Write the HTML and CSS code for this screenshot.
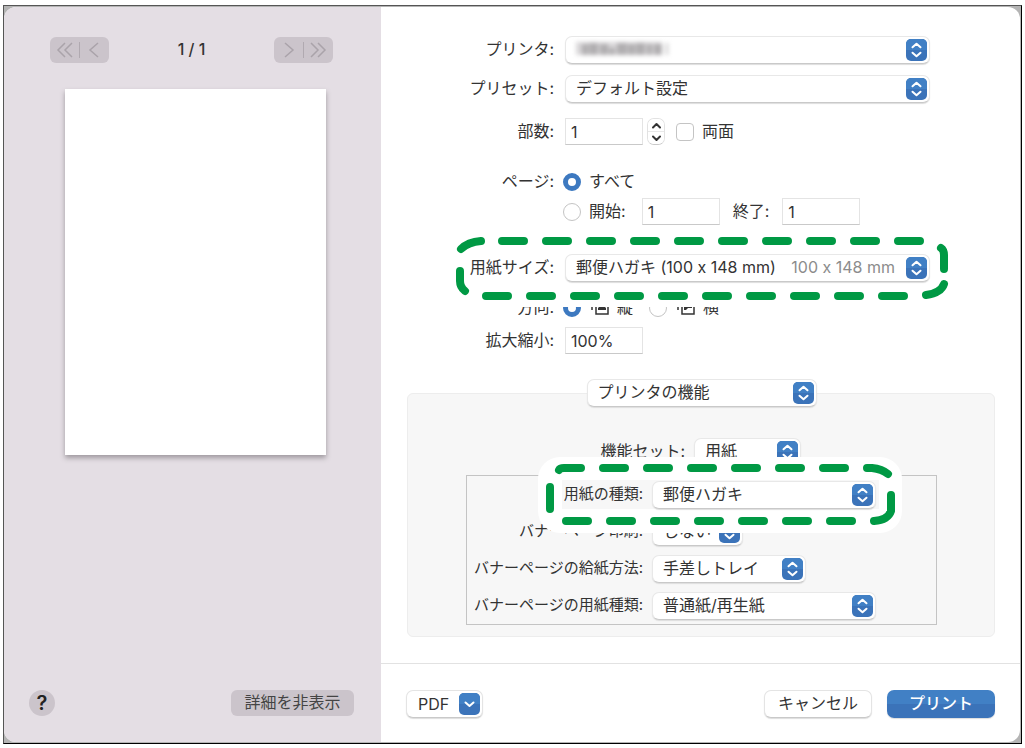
FILE: index.html
```html
<!DOCTYPE html>
<html lang="ja">
<head>
<meta charset="utf-8">
<title>プリント</title>
<link rel="stylesheet" href="styles.css">
</head>
<body>
<svg class="defs" aria-hidden="true">
  <symbol id="updown" viewBox="0 0 21 22">
    <rect width="21" height="22" rx="5" fill="#3b73b9"/>
    <path d="M0 11V5a5 5 0 0 1 5-5h11a5 5 0 0 1 5 5v6z" fill="#4180c5"/>
    <path d="M6.500 8.300 10.500 4.700l4 3.600M6.500 13.700l4 3.600 4-3.600" fill="none" stroke="#fff" stroke-width="2" stroke-linecap="round" stroke-linejoin="round"/>
  </symbol>
  <symbol id="down" viewBox="0 0 21 22">
    <rect width="21" height="22" rx="5" fill="#3b73b9"/>
    <path d="M0 11V5a5 5 0 0 1 5-5h11a5 5 0 0 1 5 5v6z" fill="#4180c5"/>
    <path d="M6.500 9.500l4 3.500 4-3.500" fill="none" stroke="#fff" stroke-width="2" stroke-linecap="round" stroke-linejoin="round"/>
  </symbol>
</svg>
<div class="frame">
<main class="dialog">
  <aside class="sidebar">
    <nav class="pager">
      <div class="pager-group">
        <button type="button" aria-label="最初のページ"><svg width="18" height="16" viewBox="0 0 18 16"><path d="M9 1 2 8l7 7M16 1 9 8l7 7"/></svg></button>
        <button type="button" aria-label="前のページ"><svg width="18" height="16" viewBox="0 0 18 16"><path d="M12 1 4 8l8 7"/></svg></button>
      </div>
      <span class="page-count">1 / 1</span>
      <div class="pager-group">
        <button type="button" aria-label="次のページ"><svg width="18" height="16" viewBox="0 0 18 16"><path d="M6 1l8 7-8 7"/></svg></button>
        <button type="button" aria-label="最後のページ"><svg width="18" height="16" viewBox="0 0 18 16"><path d="M2 1l7 7-7 7M9 1l7 7-7 7"/></svg></button>
      </div>
    </nav>
    <div class="sheet"></div>
    <div class="sidebar-foot">
      <button type="button" class="help">?</button>
      <button type="button" class="details">詳細を非表示</button>
    </div>
  </aside>
  <form class="pane">
    <div class="settings">
      <div class="row">
        <label for="printer">プリンタ:</label>
        <span class="popup wide"><select id="printer"><option></option></select><svg class="redacted" width="96" height="18" viewBox="0 0 96 18"><path d="M2 2h86v13H2z" fill="#d9d7d9"/><g fill="#b0aeb0"><path d="M8 4h6v11H8zM15 3h9v12h-9zM26 4h8v11h-8zM35 8h6v7h-6zM43 3h10v12H43zM54 4h7v11h-7zM62 3h9v12h-9zM73 4h5v11h-5zM80 4h8v11h-8z"/></g><path d="M93 3v12" stroke="#c4c2c4" stroke-width="2"/></svg><svg class="arrows"><use href="#updown"/></svg></span>
      </div>
      <div class="row preset">
        <label for="preset">プリセット:</label>
        <span class="popup wide"><select id="preset"><option>デフォルト設定</option></select><svg class="arrows"><use href="#updown"/></svg></span>
      </div>
      <div class="row copies">
        <label for="copies">部数:</label>
        <div class="line">
          <input class="field" id="copies" type="text" value="1">
          <span class="stepper">
            <button type="button" aria-label="増やす"><svg width="11" height="7" viewBox="0 0 11 7"><path d="M2 5.500 5.500 2 9 5.500"/></svg></button>
            <button type="button" aria-label="減らす"><svg width="11" height="7" viewBox="0 0 11 7"><path d="M2 1.500 5.500 5 9 1.500"/></svg></button>
          </span>
          <input class="tick" id="duplex" type="checkbox"><label for="duplex">両面</label>
        </div>
      </div>
      <div class="row pages">
        <span class="caption">ページ:</span>
        <div class="line radios"><input class="radio" type="radio" name="pages" id="all" checked><label for="all">すべて</label></div>
      </div>
      <div class="row range">
        <span></span>
        <div class="line radios">
          <input class="radio" type="radio" name="pages" id="from"><label for="from">開始:</label>
          <input class="field start" type="text" value="1" aria-label="開始">
          <label class="end-label" for="to">終了:</label>
          <input class="field" id="to" type="text" value="1">
        </div>
      </div>
      <div class="row size">
        <svg class="callout" width="506" height="77" viewBox="449 230 506 77">
          <rect x="449" y="230" width="506" height="77" rx="22" fill="#fff"/>
          <g class="dashes">
            <path d="M502 241H922M486 296H906" stroke-dasharray="22 22"/>
            <path d="M461 249Q468 242 481 241M460 271V281Q460 287 465 291M941 248Q944 250 944 255V269M944 284Q941 293 926 295"/>
          </g>
        </svg>
        <label for="size">用紙サイズ:</label>
        <span class="popup wide"><select id="size"><option>郵便ハガキ (100 x 148 mm)</option></select><span class="note">100 x 148 mm</span><svg class="arrows"><use href="#updown"/></svg></span>
      </div>
      <div class="row orientation">
        <span class="caption">方向:</span>
        <div class="line radios">
          <input class="radio" type="radio" name="dir" id="portrait" checked>
          <label class="dir" for="portrait"><svg width="20" height="22" viewBox="0 0 20 22"><path d="M3 14V6M0 9l3-3 3 3" fill="none" stroke="#333" stroke-width="1.500"/><path d="M7 4h12v14H7z" fill="#fff" stroke="#333" stroke-width="1.500"/><path d="M9 14v-2l2-2V7h4v3l2 2v2z" fill="#333"/></svg>縦</label>
          <input class="radio second" type="radio" name="dir" id="landscape">
          <label class="dir" for="landscape"><svg width="20" height="22" viewBox="0 0 20 22"><path d="M3 14V6M0 9l3-3 3 3" fill="none" stroke="#333" stroke-width="1.500"/><path d="M7 4h12v14H7z" fill="#fff" stroke="#333" stroke-width="1.500"/><path d="M9 14V7h2l2 2h4v3h-4l-2 2z" fill="#333"/></svg>横</label>
        </div>
      </div>
      <div class="row scale">
        <label for="scale">拡大縮小:</label>
        <div class="line"><input class="field" id="scale" type="text" value="100%"></div>
      </div>
    </div>
    <section class="features">
      <span class="popup section-pick"><select aria-label="設定項目"><option>プリンタの機能</option></select><svg class="arrows"><use href="#updown"/></svg></span>
      <div class="feature-set">
        <label for="fset">機能セット:</label>
        <span class="popup set"><select id="fset"><option>用紙</option></select><svg class="arrows"><use href="#updown"/></svg></span>
      </div>
      <div class="box">
        <div class="item media">
          <svg class="callout" width="364" height="76" viewBox="538 457 364 76">
            <rect x="538" y="457" width="364" height="76" rx="22" fill="#fff"/>
            <path d="M562 480h317v29H562z" fill="#f7f7f7"/>
            <g class="dashes">
              <path d="M603 468H845M566 521H852" stroke-dasharray="22 22"/>
              <path d="M559 470Q560 468 564 468H581M550 487V509M867 468H872Q882 469 888 474M891 495V511Q888 520 874 521"/>
            </g>
          </svg>
          <label for="media">用紙の種類:</label>
          <span class="popup long"><select id="media"><option>郵便ハガキ</option></select><svg class="arrows"><use href="#updown"/></svg></span>
        </div>
        <div class="item">
          <label for="banner">バナーページ印刷:</label>
          <span class="popup short"><select id="banner"><option>しない</option></select><svg class="arrows"><use href="#updown"/></svg></span>
        </div>
        <div class="item">
          <label for="feed">バナーページの給紙方法:</label>
          <span class="popup medium"><select id="feed"><option>手差しトレイ</option></select><svg class="arrows"><use href="#updown"/></svg></span>
        </div>
        <div class="item">
          <label for="bmedia">バナーページの用紙種類:</label>
          <span class="popup long"><select id="bmedia"><option>普通紙/再生紙</option></select><svg class="arrows"><use href="#updown"/></svg></span>
        </div>
      </div>
    </section>
    <footer class="actions">
      <button type="button" class="btn pdf">PDF<svg width="21" height="22"><use href="#down"/></svg></button>
      <button type="button" class="btn cancel">キャンセル</button>
      <button type="submit" class="btn primary">プリント</button>
    </footer>
  </form>
</main>
</div>
</body>
</html>
```
FILE: styles.css
```css
* { box-sizing: border-box; }

body {
  margin: 0;
  padding: 5px 3px 4px;
  background: #fff;
  color: #333;
  font: 16px/22px Inter, "Noto Sans CJK JP", sans-serif;
  font-variant-ligatures: none;
}

button, input, select {
  margin: 0;
  padding: 0;
  border: 0;
  font: inherit;
  font-variant-ligatures: none;
  color: inherit;
}

.defs { position: absolute; width: 0; height: 0; }

.frame {
  display: flex;
  min-height: calc(100vh - 9px);
  padding: 1px 1px 1px 0;
  border: 1px solid #000;
  border-top-color: #555;
  border-left-color: #555;
  background: #b4b4b4;
}

.dialog {
  display: flex;
  flex: 1;
  overflow: hidden;
  border-radius: 12px;
  background: #fff;
}

/* Preview column */
.sidebar {
  display: flex;
  flex: 0 0 377px;
  flex-direction: column;
  background: #e4dee4;
}

.pager {
  display: flex;
  align-items: center;
  justify-content: space-between;
  padding: 30px 48px 0 46px;
}

.page-count { padding-bottom: 2px; font-weight: 500; }

.pager-group {
  display: flex;
  width: 59px;
  height: 26px;
  border-radius: 6px;
  background: #cbc4cb;
}

.pager-group button {
  display: grid;
  flex: 1;
  place-items: center;
  margin: 5px 0;
  background: none;
}

.pager-group button + button { border-left: 1px solid #b0a9b0; }

.pager-group path { fill: none; stroke: #aaa3aa; stroke-width: 1.500; }

.sheet {
  width: 261px;
  height: 366px;
  margin: 26px 0 0 61px;
  background: #fff;
  box-shadow: 0 3px 5px #9f999f;
}

.sidebar-foot {
  display: flex;
  align-items: center;
  justify-content: space-between;
  margin-top: auto;
  padding: 0 27px 26px 25px;
}

.help {
  width: 26px;
  height: 26px;
  border-radius: 50%;
  background: #cbc4cb;
  color: #222;
  font-size: 20px;
  font-weight: 600;
}

.details {
  width: 123px;
  height: 26px;
  padding-bottom: 2px;
  border-radius: 6px;
  background: #cbc4cb;
  color: #444;
}

/* Settings column */
.pane {
  display: flex;
  flex: 1;
  flex-direction: column;
}

.settings { padding-top: 29px; }

label, .caption { padding-bottom: 2px; }

.row {
  position: relative;
  display: grid;
  grid-template-columns: 173px 1fr;
  column-gap: 11px;
  align-items: center;
}

.row > label, .caption, .item > label { text-align: right; white-space: nowrap; }

.preset { margin-top: 11px; }
.copies { margin-top: 15px; }
.pages { margin-top: 25px; }
.range { margin-top: 4px; }
.size { z-index: 1; margin-top: 29px; }
.orientation { margin-top: 14px; }
.scale { margin-top: 7px; }

.line { display: flex; align-items: center; }
.radios { margin-left: -2px; }

.popup {
  position: relative;
  display: block;
  height: 28px;
}

.popup select {
  width: 100%;
  height: 100%;
  padding: 0 28px 2px 10px;
  border: 1px solid #e8e8e8;
  border-bottom-color: #c9c9c9;
  border-radius: 7px;
  background: #fff;
  box-shadow: 0 1px 1px #ddd;
  appearance: none;
}

.arrows {
  position: absolute;
  top: 3px;
  right: 3px;
  width: 21px;
  height: 22px;
  pointer-events: none;
}

.wide { width: 365px; }

.redacted {
  position: absolute;
  top: 4px;
  left: 9px;
  filter: blur(2px);
  pointer-events: none;
}

.note {
  position: absolute;
  top: 2px;
  right: 35px;
  color: #8c8c8c;
  pointer-events: none;
}

.field {
  width: 78px;
  height: 27px;
  padding: 0 5px;
  border: 1px solid #e4e4e4;
  border-bottom-color: #c9c9c9;
  background: #fff;
}

.start { margin-left: 16px; }
.end-label { margin: 0 13px; }

.stepper {
  display: flex;
  flex-direction: column;
  width: 18px;
  height: 27px;
  margin: 0 11px 0 4px;
  overflow: hidden;
  border: 1px solid #e2e2e2;
  border-bottom-color: #c9c9c9;
  border-radius: 7px;
}

.stepper button { display: grid; flex: 1; place-items: center; background: #fff; }
.stepper button + button { border-top: 1px solid #e8e8e8; }
.stepper path { fill: none; stroke: #333; stroke-width: 2; stroke-linecap: round; stroke-linejoin: round; }

.tick, .radio {
  flex: none;
  width: 18px;
  height: 18px;
  margin-right: 8px;
  border: 1px solid #c4c4c4;
  background: #fff;
  appearance: none;
}

.tick { border-radius: 4px; }
.radio { border-radius: 50%; }
.radio:checked { border: 5px solid #3d79c0; }
.second { margin-left: 16px; }

.dir { display: flex; align-items: center; gap: 8px; }

.callout {
  position: absolute;
  z-index: -1;
  pointer-events: none;
}

.dashes {
  fill: none;
  stroke: #009944;
  stroke-width: 8;
  stroke-linecap: round;
  stroke-linejoin: round;
}

.size .callout { top: -24px; left: 68px; }

/* Printer feature group */
.features {
  display: flex;
  flex-direction: column;
  margin: 39px 25px 0 26px;
  padding: 0 57px 11px 58px;
  border: 1px solid #ededed;
  border-radius: 6px;
  background: #f7f7f7;
}

.section-pick { width: 230px; margin: -15px auto 0; }

.feature-set {
  display: grid;
  grid-template-columns: 219px 107px;
  column-gap: 9px;
  align-items: center;
  margin: 31px 0 9px;
}

.feature-set label { text-align: right; }

.box {
  display: grid;
  row-gap: 9px;
  padding: 5px 0 4px;
  border: 1px solid #c4c4c4;
}

.item {
  position: relative;
  display: grid;
  grid-template-columns: 176px 1fr;
  column-gap: 9px;
  align-items: center;
}

.item > label { font-size: 15px; }

.media { z-index: 1; }
.media .callout { top: -24px; left: 71px; }

.long { width: 224px; }
.medium { width: 154px; }
.short { width: 91px; }

/* Button bar */
.actions {
  display: flex;
  align-items: center;
  gap: 15px;
  margin-top: auto;
  padding: 26px 25px 24px;
  border-top: 1px solid #e2e2e2;
}

.btn {
  width: 108px;
  height: 28px;
  padding-bottom: 2px;
  border: 1px solid #e4e4e4;
  border-bottom-color: #c9c9c9;
  border-radius: 7px;
  background: #fff;
  box-shadow: 0 1px 1px #ddd;
}

.pdf {
  display: flex;
  align-items: center;
  justify-content: space-between;
  width: 77px;
  margin-right: auto;
  padding: 0 2px 0 11px;
}

.primary {
  border: 0;
  background: linear-gradient(#4180c5 50%, #3b73b9 50%);
  color: #fff;
  font-weight: 500;
}
```
